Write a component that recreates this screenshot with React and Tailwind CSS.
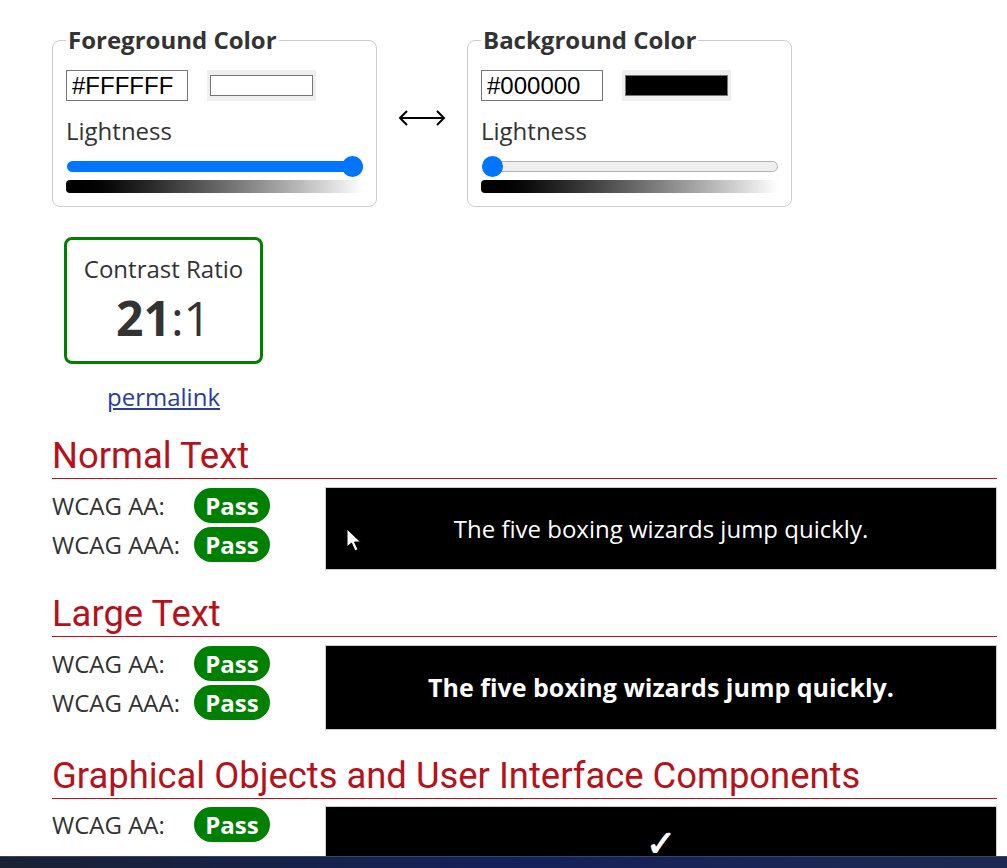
import React from "react";

function ColorPanel({ title, hex, swatch, value }) {
  return (
    <fieldset className="w-[325px] border border-[#cccccc] rounded-lg px-[13px] pb-[13px] pt-[14px]">
      <legend className="px-[2px] text-[24px] font-bold leading-[32px] text-[#333]">{title}</legend>
      <div className="flex items-center gap-[19px]">
        <div className="w-[122px] h-[31px] border border-[#767676] px-[5px] font-['Liberation_Sans',Arial,sans-serif] text-[24px] leading-[29px] text-black">
          {hex}
        </div>
        <div className="w-[109px] h-[31px] bg-[#efefef] px-[3px] py-[5px]">
          <div className="w-full h-full border border-[#767676]" style={{ background: swatch }} />
        </div>
      </div>
      <div className="mt-[13px] text-[24px] leading-[33px] text-[#333]">Lightness</div>
      <div className="relative mt-[9px] h-[21px] ml-[1px]">
        {value === 100 ? (
          <div className="absolute left-0 right-0 top-[5px] h-[11px] rounded-full bg-[#0075ff]" />
        ) : (
          <div className="absolute left-0 right-0 top-[5px] h-[11px] rounded-full bg-[#efefef] border border-[#b2b2b2]" />
        )}
        <div
          className="absolute top-0 w-[21px] h-[21px] rounded-full bg-[#0075ff]"
          style={value === 100 ? { right: 0 } : { left: 0 }}
        />
      </div>
      <div className="mt-[3px] h-[13px] rounded-l-[4px] bg-gradient-to-r from-black to-white" />
    </fieldset>
  );
}

function Badge() {
  return (
    <span className="inline-flex items-center justify-center w-[76px] h-[35px] rounded-full bg-[#008000] text-white text-[24px] leading-[33px] font-bold">
      Pass
    </span>
  );
}

function Heading({ children }) {
  return (
    <h2 className="font-['Roboto',sans-serif] text-[36.4px] leading-[40px] text-[#b5121b] border-b border-[#b5121b] pb-[2px]">
      {children}
    </h2>
  );
}

function Row({ label }) {
  return (
    <div className="flex items-center h-[35px]">
      <span className="w-[142px] text-[24px] leading-[33px] text-[#333]">{label}</span>
      <Badge />
    </div>
  );
}

export default function App() {
  return (
    <div className="min-h-screen bg-white font-['Open_Sans',sans-serif] text-[#333] overflow-hidden">
      <div className="ml-[52px] w-[945px] pt-[24px]">
        <div className="flex items-start">
          <ColorPanel title="Foreground Color" hex="#FFFFFF" swatch="#ffffff" value={100} />
          <div className="w-[90px] flex justify-center pt-[84px]">
            <svg width="48" height="20" viewBox="0 0 48 20" fill="none" stroke="black" strokeWidth="2">
              <path d="M2 10 H46" />
              <path d="M9 3 L2 10 L9 17" />
              <path d="M39 3 L46 10 L39 17" />
            </svg>
          </div>
          <ColorPanel title="Background Color" hex="#000000" swatch="#000000" value={0} />
        </div>

        <div className="ml-[12px] mt-[30px] w-[199px]">
          <div className="h-[127px] border-[3px] border-[#008000] rounded-lg flex flex-col items-center pt-[12px]">
            <div className="text-[24px] leading-[33px] text-[#333]">Contrast Ratio</div>
            <div className="text-[48px] leading-[56px] mt-[5px] text-[#333]">
              <span className="font-bold">21</span>:1
            </div>
          </div>
          <div className="mt-[16px] text-center">
            <a href="#" className="text-[24px] leading-[33px] text-[#2a3d9b] underline">permalink</a>
          </div>
        </div>

        <div className="mt-[23px]">
          <Heading>Normal Text</Heading>
          <div className="flex mt-[8px]">
            <div className="flex flex-col gap-[4px] pt-[1px]">
              <Row label="WCAG AA:" />
              <Row label="WCAG AAA:" />
            </div>
            <div className="relative ml-[55px] flex-1 h-[83px] bg-black border border-[#cccccc] flex items-center justify-center text-white text-[24px]">
              The five boxing wizards jump quickly.
              <svg className="absolute left-[20px] top-[40px]" width="16" height="25" viewBox="0 0 16 25">
                <path d="M1 1 L1 19 L5.5 15 L9 23 L12 21.5 L8.5 14 L14.5 14 Z" fill="white" stroke="black" strokeWidth="1" />
              </svg>
            </div>
          </div>
        </div>

        <div className="mt-[24px]">
          <Heading>Large Text</Heading>
          <div className="flex mt-[8px]">
            <div className="flex flex-col gap-[4px] pt-[1px]">
              <Row label="WCAG AA:" />
              <Row label="WCAG AAA:" />
            </div>
            <div className="ml-[55px] flex-1 h-[85px] bg-black border border-[#cccccc] flex items-center justify-center text-white text-[25px] font-bold">
              The five boxing wizards jump quickly.
            </div>
          </div>
        </div>

        <div className="mt-[26px]">
          <Heading>Graphical Objects and User Interface Components</Heading>
          <div className="flex mt-[7px]">
            <div className="flex flex-col pt-[1px]">
              <Row label="WCAG AA:" />
            </div>
            <div className="ml-[55px] flex-1 h-[80px] bg-black border border-[#cccccc] flex justify-center pt-[18px] text-white text-[36px] leading-[36px] font-bold">
              ✓
            </div>
          </div>
        </div>
      </div>
      <div className="fixed left-0 right-0 bottom-0 h-[12px] border-t border-[#3a4560] bg-gradient-to-r from-[#1a2133] via-[#14205a] to-[#1d2850]" />
    </div>
  );
}
